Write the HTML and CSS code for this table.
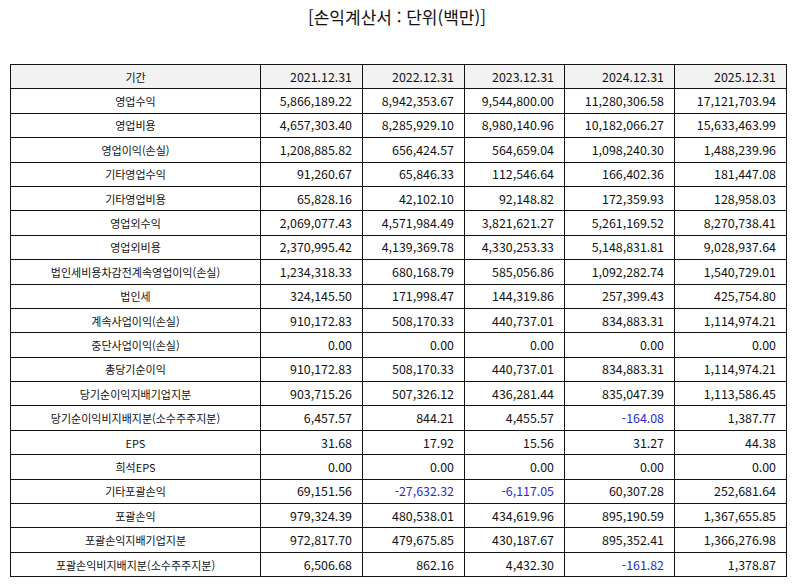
FILE: index.html
```html
<!DOCTYPE html>
<html lang="ko">
<head>
<meta charset="utf-8">
<link rel="stylesheet" href="styles.css">
</head>
<body>
<h1 class="title">[손익계산서 : 단위(백만)]</h1>
<table class="fin">
<colgroup>
<col class="c0"><col class="c1"><col class="c2"><col class="c3"><col class="c4"><col class="c5">
</colgroup>
<thead>
<tr><th class="lbl">기간</th><th>2021.12.31</th><th>2022.12.31</th><th>2023.12.31</th><th>2024.12.31</th><th>2025.12.31</th></tr>
</thead>
<tbody>
<tr><td class="lbl">영업수익</td><td>5,866,189.22</td><td>8,942,353.67</td><td>9,544,800.00</td><td>11,280,306.58</td><td>17,121,703.94</td></tr>
<tr><td class="lbl">영업비용</td><td>4,657,303.40</td><td>8,285,929.10</td><td>8,980,140.96</td><td>10,182,066.27</td><td>15,633,463.99</td></tr>
<tr><td class="lbl">영업이익(손실)</td><td>1,208,885.82</td><td>656,424.57</td><td>564,659.04</td><td>1,098,240.30</td><td>1,488,239.96</td></tr>
<tr><td class="lbl">기타영업수익</td><td>91,260.67</td><td>65,846.33</td><td>112,546.64</td><td>166,402.36</td><td>181,447.08</td></tr>
<tr><td class="lbl">기타영업비용</td><td>65,828.16</td><td>42,102.10</td><td>92,148.82</td><td>172,359.93</td><td>128,958.03</td></tr>
<tr><td class="lbl">영업외수익</td><td>2,069,077.43</td><td>4,571,984.49</td><td>3,821,621.27</td><td>5,261,169.52</td><td>8,270,738.41</td></tr>
<tr><td class="lbl">영업외비용</td><td>2,370,995.42</td><td>4,139,369.78</td><td>4,330,253.33</td><td>5,148,831.81</td><td>9,028,937.64</td></tr>
<tr><td class="lbl">법인세비용차감전계속영업이익(손실)</td><td>1,234,318.33</td><td>680,168.79</td><td>585,056.86</td><td>1,092,282.74</td><td>1,540,729.01</td></tr>
<tr><td class="lbl">법인세</td><td>324,145.50</td><td>171,998.47</td><td>144,319.86</td><td>257,399.43</td><td>425,754.80</td></tr>
<tr><td class="lbl">계속사업이익(손실)</td><td>910,172.83</td><td>508,170.33</td><td>440,737.01</td><td>834,883.31</td><td>1,114,974.21</td></tr>
<tr><td class="lbl">중단사업이익(손실)</td><td>0.00</td><td>0.00</td><td>0.00</td><td>0.00</td><td>0.00</td></tr>
<tr><td class="lbl">총당기순이익</td><td>910,172.83</td><td>508,170.33</td><td>440,737.01</td><td>834,883.31</td><td>1,114,974.21</td></tr>
<tr><td class="lbl">당기순이익지배기업지분</td><td>903,715.26</td><td>507,326.12</td><td>436,281.44</td><td>835,047.39</td><td>1,113,586.45</td></tr>
<tr><td class="lbl">당기순이익비지배지분(소수주주지분)</td><td>6,457.57</td><td>844.21</td><td>4,455.57</td><td class="neg">-164.08</td><td>1,387.77</td></tr>
<tr><td class="lbl">EPS</td><td>31.68</td><td>17.92</td><td>15.56</td><td>31.27</td><td>44.38</td></tr>
<tr><td class="lbl">희석EPS</td><td>0.00</td><td>0.00</td><td>0.00</td><td>0.00</td><td>0.00</td></tr>
<tr><td class="lbl">기타포괄손익</td><td>69,151.56</td><td class="neg">-27,632.32</td><td class="neg">-6,117.05</td><td>60,307.28</td><td>252,681.64</td></tr>
<tr><td class="lbl">포괄손익</td><td>979,324.39</td><td>480,538.01</td><td>434,619.96</td><td>895,190.59</td><td>1,367,655.85</td></tr>
<tr><td class="lbl">포괄손익지배기업지분</td><td>972,817.70</td><td>479,675.85</td><td>430,187.67</td><td>895,352.41</td><td>1,366,276.98</td></tr>
<tr><td class="lbl">포괄손익비지배지분(소수주주지분)</td><td>6,506.68</td><td>862.16</td><td>4,432.30</td><td class="neg">-161.82</td><td>1,378.87</td></tr>
</tbody>
</table>
</body>
</html>
```
FILE: styles.css
```css
html, body {
  margin: 0;
  padding: 0;
  background: #ffffff;
}
body {
  font-family: "Noto Sans CJK KR", "Noto Sans", sans-serif;
  color: #111111;
}
.title {
  margin: 0;
  padding-top: 5px;
  height: 64px;
  box-sizing: border-box;
  text-align: center;
  font-size: 17px;
  font-weight: normal;
  line-height: 24px;
  color: #111;
}
.fin {
  margin-left: 10px;
  width: 777px;
  table-layout: fixed;
  border-collapse: collapse;
  font-size: 12.4px;
}
.c0 { width: 250px; }
.c1 { width: 102px; }
.c2 { width: 102px; }
.c3 { width: 100px; }
.c4 { width: 110px; }
.c5 { width: 112px; }
.fin th, .fin td {
  border: 1px solid #111;
  height: 23.4px;
  padding: 0 10px 0 4px;
  text-align: right;
  font-weight: normal;
  line-height: 14px;
  white-space: nowrap;
}
.fin thead th {
  background: #f2f2f2;
}
.fin .lbl {
  text-align: center;
  padding: 0 4px;
  font-size: 11px;
}
.fin .neg {
  color: #2b2bd0;
}
```
